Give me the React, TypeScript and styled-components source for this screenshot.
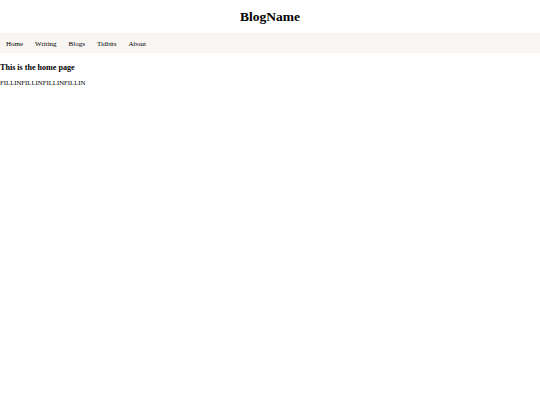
import React from "react";
import styled, { createGlobalStyle } from "styled-components";

const GlobalStyle = createGlobalStyle`
  body {
    margin: 0;
    background: #ffffff;
    font-family: "Liberation Serif", "Times New Roman", serif;
    color: #000000;
  }
`;

const Header = styled.header`
  height: 33px;
  display: flex;
  align-items: center;
  justify-content: center;
`;

const Title = styled.h1`
  margin: 0;
  font-size: 13.5px;
  font-weight: bold;
`;

const NavBar = styled.nav`
  height: 20px;
  display: flex;
  align-items: center;
  padding: 1px 0 0;
  box-sizing: border-box;
  background-color: #f8f5f2;
`;

const NavLink = styled.a`
  padding: 0 6px;
  font-size: 7px;
  color: #000000;
  text-decoration: none;
  cursor: pointer;
`;

const Main = styled.main`
  padding-top: 10px;
`;

const PageTitle = styled.h3`
  margin: 0;
  font-size: 8.1px;
  line-height: 10px;
  font-weight: bold;
`;

const Text = styled.p`
  margin: 6px 0 0;
  font-size: 6.75px;
  line-height: 8px;
`;

const links = ["Home", "Writing", "Blogs", "Tidbits", "About"];

export default function App() {
  return (
    <>
      <GlobalStyle />
      <Header>
        <Title>BlogName</Title>
      </Header>
      <NavBar>
        {links.map((l) => (
          <NavLink key={l}>{l}</NavLink>
        ))}
      </NavBar>
      <Main>
        <PageTitle>This is the home page</PageTitle>
        <Text>FILLINFILLINFILLINFILLIN</Text>
      </Main>
    </>
  );
}
